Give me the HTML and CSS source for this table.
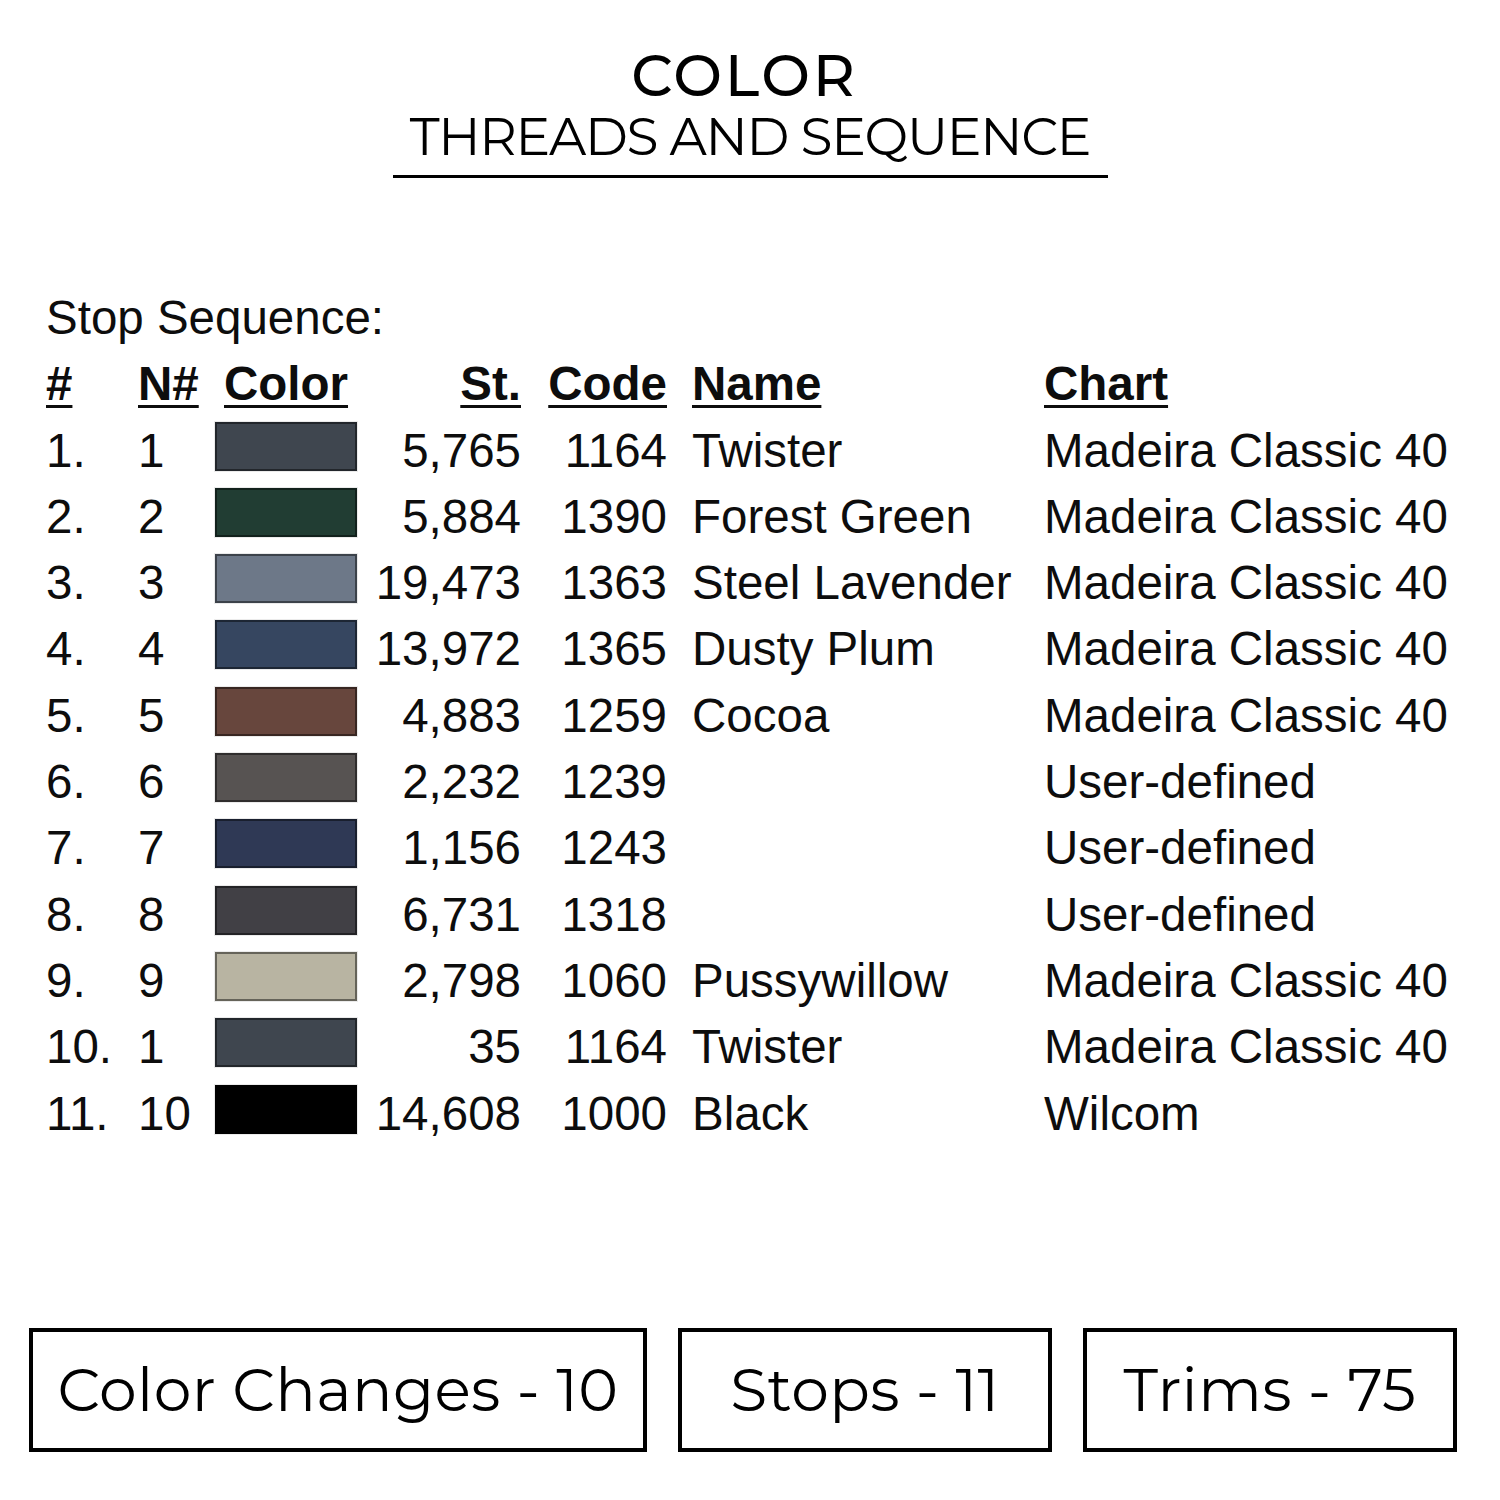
FILE: index.html
```html
<!DOCTYPE html>
<html lang="en">
<head>
<meta charset="utf-8">
<title>Color Threads and Sequence</title>
<link rel="stylesheet" href="styles.css">
</head>
<body>
<div class="page">
  <header class="title">
    <div class="title-inner">
      <div class="title-main">COLOR</div>
      <div class="title-sub">THREADS AND SEQUENCE</div>
    </div>
  </header>

  <section class="sequence">
    <div class="caption">Stop Sequence:</div>
    <div class="row head">
      <span class="c-num"><u>#</u></span>
      <span class="c-n"><u>N#</u></span>
      <span class="c-col head-color"><u>Color</u></span>
      <span class="c-st"><u>St.</u></span>
      <span class="c-code"><u>Code</u></span>
      <span class="c-name"><u>Name</u></span>
      <span class="c-chart"><u>Chart</u></span>
    </div>

    <div class="row"><span class="c-num">1.</span><span class="c-n">1</span><span class="c-col"><i class="sw sw-1"></i></span><span class="c-st">5,765</span><span class="c-code">1164</span><span class="c-name">Twister</span><span class="c-chart">Madeira Classic 40</span></div>
    <div class="row"><span class="c-num">2.</span><span class="c-n">2</span><span class="c-col"><i class="sw sw-2"></i></span><span class="c-st">5,884</span><span class="c-code">1390</span><span class="c-name">Forest Green</span><span class="c-chart">Madeira Classic 40</span></div>
    <div class="row"><span class="c-num">3.</span><span class="c-n">3</span><span class="c-col"><i class="sw sw-3"></i></span><span class="c-st">19,473</span><span class="c-code">1363</span><span class="c-name">Steel Lavender</span><span class="c-chart">Madeira Classic 40</span></div>
    <div class="row"><span class="c-num">4.</span><span class="c-n">4</span><span class="c-col"><i class="sw sw-4"></i></span><span class="c-st">13,972</span><span class="c-code">1365</span><span class="c-name">Dusty Plum</span><span class="c-chart">Madeira Classic 40</span></div>
    <div class="row"><span class="c-num">5.</span><span class="c-n">5</span><span class="c-col"><i class="sw sw-5"></i></span><span class="c-st">4,883</span><span class="c-code">1259</span><span class="c-name">Cocoa</span><span class="c-chart">Madeira Classic 40</span></div>
    <div class="row"><span class="c-num">6.</span><span class="c-n">6</span><span class="c-col"><i class="sw sw-6"></i></span><span class="c-st">2,232</span><span class="c-code">1239</span><span class="c-name"></span><span class="c-chart">User-defined</span></div>
    <div class="row"><span class="c-num">7.</span><span class="c-n">7</span><span class="c-col"><i class="sw sw-7"></i></span><span class="c-st">1,156</span><span class="c-code">1243</span><span class="c-name"></span><span class="c-chart">User-defined</span></div>
    <div class="row"><span class="c-num">8.</span><span class="c-n">8</span><span class="c-col"><i class="sw sw-8"></i></span><span class="c-st">6,731</span><span class="c-code">1318</span><span class="c-name"></span><span class="c-chart">User-defined</span></div>
    <div class="row"><span class="c-num">9.</span><span class="c-n">9</span><span class="c-col"><i class="sw sw-9"></i></span><span class="c-st">2,798</span><span class="c-code">1060</span><span class="c-name">Pussywillow</span><span class="c-chart">Madeira Classic 40</span></div>
    <div class="row"><span class="c-num">10.</span><span class="c-n">1</span><span class="c-col"><i class="sw sw-1"></i></span><span class="c-st">35</span><span class="c-code">1164</span><span class="c-name">Twister</span><span class="c-chart">Madeira Classic 40</span></div>
    <div class="row"><span class="c-num">11.</span><span class="c-n">10</span><span class="c-col"><i class="sw sw-11"></i></span><span class="c-st">14,608</span><span class="c-code">1000</span><span class="c-name">Black</span><span class="c-chart">Wilcom</span></div>
  </section>

  <footer class="stats">
    <div class="stat stat-wide">Color Changes - 10</div>
    <div class="stat">Stops - 11</div>
    <div class="stat">Trims - 75</div>
  </footer>
</div>
</body>
</html>
```

FILE: styles.css
```css
html, body {
  margin: 0;
  padding: 0;
  background: #ffffff;
}

.page {
  width: 1500px;
  height: 1500px;
  box-sizing: border-box;
  color: #000;
}

/* ---------- title ---------- */
.title {
  padding-top: 45px;
}

.title-inner {
  width: 715px;
  margin: 0 auto;
  padding-bottom: 8px;
  border-bottom: 3px solid #000;
  text-align: center;
  font-family: "Montserrat", "DejaVu Sans", sans-serif;
  line-height: 61px;
}

.title-main {
  font-size: 58px;
  font-weight: 500;
  letter-spacing: 2.8px;
  padding-right: 11px;
}

.title-sub {
  font-size: 52px;
  letter-spacing: -1.3px;
}

/* ---------- sequence table ---------- */
.sequence {
  margin-top: 107px;
  padding-left: 46px;
  font-family: "Liberation Sans", Arial, sans-serif;
  font-size: 47.5px;
  line-height: 66.3px;
  color: #0d0d0d;
}

.caption {
  height: 66.3px;
}

.row {
  display: grid;
  grid-template-columns: 92px 77px 142px 164px 146px 377px auto;
  height: 66.3px;
  white-space: nowrap;
}

.row.head {
  font-weight: bold;
}

.row.head u {
  text-decoration-thickness: 3px;
  text-underline-offset: 5px;
}

.c-st,
.c-code {
  text-align: right;
}

.c-name {
  padding-left: 25px;
}

.head-color {
  padding-left: 9px;
}

.c-col {
  display: flex;
  align-items: flex-start;
}

.sw {
  display: block;
  width: 142px;
  height: 49px;
  margin-top: 4px;
  box-sizing: border-box;
  border: 2px solid rgba(0, 0, 0, 0.45);
  box-shadow: 0 0 0 1px rgba(0, 0, 0, 0.08);
}

.sw-1 { background: #3f464f; }
.sw-2 { background: #213d33; }
.sw-3 { background: #6d7888; }
.sw-4 { background: #364660; }
.sw-5 { background: #67463d; }
.sw-6 { background: #575352; }
.sw-7 { background: #2f3955; }
.sw-8 { background: #414045; }
.sw-9 { background: #b8b4a2; }
.sw-11 { background: #000000; border-color: #000; }

/* ---------- stats boxes ---------- */
.stats {
  display: flex;
  gap: 31px;
  padding-left: 29px;
  margin-top: 181px;
}

.stat {
  width: 374px;
  height: 124px;
  box-sizing: border-box;
  border: 4px solid #000;
  display: flex;
  align-items: center;
  justify-content: center;
  font-family: "Montserrat", "DejaVu Sans", sans-serif;
  font-size: 60px;
  letter-spacing: 0.4px;
  color: #000;
}

.stat-wide {
  width: 618px;
}
```
